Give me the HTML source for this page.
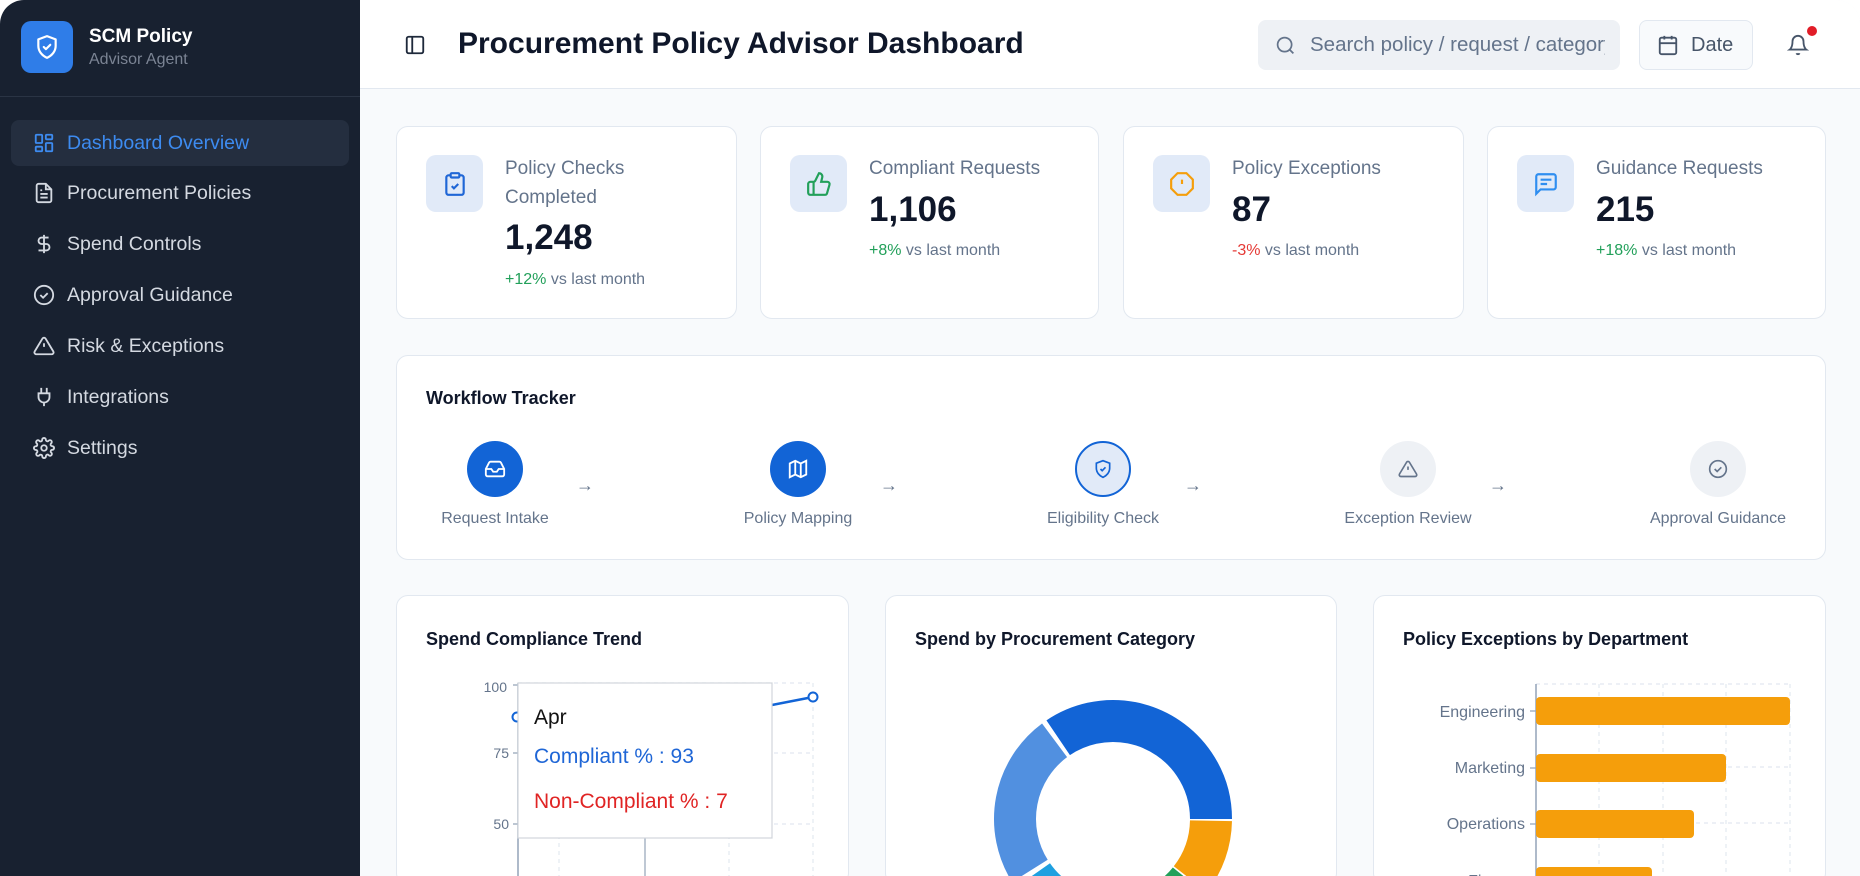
<!DOCTYPE html>
<html><head><meta charset="utf-8"><style>
*{box-sizing:border-box;margin:0;padding:0}
body{width:1860px;height:876px;background:#fff;font-family:"Liberation Sans",sans-serif;overflow:hidden}
#app{position:absolute;left:0;top:0;width:1860px;height:876px;border-radius:24px 24px 0 0;overflow:hidden;background:#f8fafc}
.side{position:absolute;left:0;top:0;width:360px;height:876px;background:#182130}
.abs{position:absolute}
.nav{position:absolute;left:11px;width:338px;height:46px;display:flex;align-items:center;color:#d4d9e1;font-size:19.5px}
.nav svg{position:absolute;left:22px}
.nav span{position:absolute;left:56px}
.card{position:absolute;background:#fff;border:1.5px solid #e2e8f0;border-radius:12px}
.ibox{position:absolute;left:29px;top:28px;width:57px;height:57px;border-radius:10px;background:#e1eaf8;display:flex;align-items:center;justify-content:center}
.lbl{position:absolute;left:108px;color:#64748b;font-size:19px;line-height:29px}
.val{position:absolute;left:108px;color:#0f172a;font-size:35px;font-weight:bold}
.chg{position:absolute;left:108px;color:#64748b;font-size:16px}
.g{color:#22a05a}.r{color:#e53935}
.ct{position:absolute;left:29px;top:32px;font-size:18px;font-weight:bold;color:#0f172a}
.step{position:absolute;width:56px;height:56px;border-radius:50%;display:flex;align-items:center;justify-content:center}
.sl{position:absolute;width:200px;text-align:center;font-size:16px;color:#64748b}
.arr{position:absolute;color:#64748b;font-size:18px}
</style></head><body><div id="app">
<div class="side">
 <div class="abs" style="left:21px;top:21px;width:52px;height:52px;border-radius:10px;background:#2f7de8;display:flex;align-items:center;justify-content:center">
  <svg width="26" height="26" viewBox="0 0 24 24" fill="none" stroke="#fff" stroke-width="2" stroke-linecap="round" stroke-linejoin="round"><path d="M12 2l8 3v6c0 5-3.5 9-8 11-4.5-2-8-6-8-11V5z"/><path d="M9 12l2 2 4-4"/></svg>
 </div>
 <div class="abs" style="left:89px;top:26px;color:#fff;font-size:19px;font-weight:bold">SCM Policy</div>
 <div class="abs" style="left:89px;top:51px;color:#7b8494;font-size:16px">Advisor Agent</div>
 <div class="abs" style="left:0;top:96px;width:360px;height:1px;background:#2a3444"></div>
 <div class="nav" style="top:120px;background:#242e3f;border-radius:8px;color:#3d8bf0"><svg width="22" height="22" viewBox="0 0 24 24" fill="none" stroke="#3d8bf0" stroke-width="2"><rect x="3" y="3" width="7" height="9" rx="1"/><rect x="14" y="3" width="7" height="5" rx="1"/><rect x="14" y="12" width="7" height="9" rx="1"/><rect x="3" y="16" width="7" height="5" rx="1"/></svg><span>Dashboard Overview</span></div>
 <div class="nav" style="top:170px"><svg width="22" height="22" viewBox="0 0 24 24" fill="none" stroke="#d4d9e1" stroke-width="2"><path d="M14 2H6a2 2 0 0 0-2 2v16a2 2 0 0 0 2 2h12a2 2 0 0 0 2-2V8z"/><path d="M14 2v6h6M8 13h8M8 17h8M8 9h2"/></svg><span>Procurement Policies</span></div>
 <div class="nav" style="top:221px"><svg width="22" height="22" viewBox="0 0 24 24" fill="none" stroke="#d4d9e1" stroke-width="2"><path d="M12 2v20M17 5H9.5a3.5 3.5 0 0 0 0 7h5a3.5 3.5 0 0 1 0 7H6"/></svg><span>Spend Controls</span></div>
 <div class="nav" style="top:272px"><svg width="22" height="22" viewBox="0 0 24 24" fill="none" stroke="#d4d9e1" stroke-width="2"><circle cx="12" cy="12" r="10"/><path d="M8 12l3 3 5-5"/></svg><span>Approval Guidance</span></div>
 <div class="nav" style="top:323px"><svg width="22" height="22" viewBox="0 0 24 24" fill="none" stroke="#d4d9e1" stroke-width="2"><path d="M10.3 3.9L1.8 18a2 2 0 0 0 1.7 3h17a2 2 0 0 0 1.7-3L13.7 3.9a2 2 0 0 0-3.4 0z"/><path d="M12 9v4M12 17h.01"/></svg><span>Risk &amp; Exceptions</span></div>
 <div class="nav" style="top:374px"><svg width="22" height="22" viewBox="0 0 24 24" fill="none" stroke="#d4d9e1" stroke-width="2"><path d="M9 2v6M15 2v6M6 8h12v4a6 6 0 0 1-12 0zM12 18v4"/></svg><span>Integrations</span></div>
 <div class="nav" style="top:425px"><svg width="22" height="22" viewBox="0 0 24 24" fill="none" stroke="#d4d9e1" stroke-width="2"><circle cx="12" cy="12" r="3"/><path d="M19.4 15a1.7 1.7 0 0 0 .3 1.8l.1.1a2 2 0 1 1-2.8 2.8l-.1-.1a1.7 1.7 0 0 0-1.8-.3 1.7 1.7 0 0 0-1 1.5V21a2 2 0 1 1-4 0v-.1a1.7 1.7 0 0 0-1.1-1.5 1.7 1.7 0 0 0-1.8.3l-.1.1a2 2 0 1 1-2.8-2.8l.1-.1a1.7 1.7 0 0 0 .3-1.8 1.7 1.7 0 0 0-1.5-1H3a2 2 0 1 1 0-4h.1a1.7 1.7 0 0 0 1.5-1.1 1.7 1.7 0 0 0-.3-1.8l-.1-.1a2 2 0 1 1 2.8-2.8l.1.1a1.7 1.7 0 0 0 1.800.3H9a1.7 1.7 0 0 0 1-1.5V3a2 2 0 1 1 4 0v.1a1.7 1.7 0 0 0 1 1.5 1.7 1.7 0 0 0 1.8-.3l.1-.1a2 2 0 1 1 2.8 2.8l-.1.1a1.7 1.7 0 0 0-.3 1.8V9a1.7 1.7 0 0 0 1.5 1H21a2 2 0 1 1 0 4h-.1a1.7 1.7 0 0 0-1.5 1z"/></svg><span>Settings</span></div>
</div>
<div class="abs" style="left:360px;top:0;width:1500px;height:89px;background:#fff;border-bottom:1.5px solid #e2e8f0"></div>
<svg class="abs" style="left:404px;top:34px" width="22" height="22" viewBox="0 0 24 24" fill="none" stroke="#1e293b" stroke-width="2"><rect x="3" y="3" width="18" height="18" rx="2"/><path d="M9 3v18"/></svg>
<div class="abs" style="left:458px;top:27px;font-size:30px;font-weight:bold;color:#0f172a">Procurement Policy Advisor Dashboard</div>
<div class="abs" style="left:1258px;top:20px;width:362px;height:50px;background:#eef1f5;border-radius:8px;overflow:hidden">
 <svg class="abs" style="left:17px;top:15px" width="21" height="21" viewBox="0 0 24 24" fill="none" stroke="#64748b" stroke-width="2"><circle cx="11" cy="11" r="8"/><path d="M21 21l-4.3-4.3"/></svg>
 <div class="abs" style="left:52px;top:13px;font-size:20.5px;color:#64748b;white-space:nowrap;width:295px;overflow:hidden">Search policy / request / category</div>
</div>
<div class="abs" style="left:1639px;top:20px;width:114px;height:50px;border:1.5px solid #e2e8f0;border-radius:8px;background:#f8fafc">
 <svg class="abs" style="left:17px;top:13px" width="22" height="22" viewBox="0 0 24 24" fill="none" stroke="#475569" stroke-width="2"><rect x="3" y="4" width="18" height="18" rx="2"/><path d="M16 2v4M8 2v4M3 10h18M8 14h.01M12 14h.01M16 14h.01M8 18h.01M12 18h.01M16 18h.01"/></svg>
 <div class="abs" style="left:51px;top:13px;font-size:20px;color:#475569">Date</div>
</div>
<svg class="abs" style="left:1787px;top:33px" width="22" height="24" viewBox="0 0 24 24" fill="none" stroke="#475569" stroke-width="2"><path d="M6 8a6 6 0 0 1 12 0c0 7 3 9 3 9H3s3-2 3-9M10.3 21a1.9 1.9 0 0 0 3.4 0"/></svg>
<div class="abs" style="left:1807px;top:26px;width:10px;height:10px;border-radius:50%;background:#e11d28"></div>

<div class="card" style="left:396px;top:126px;width:341px;height:193px">
 <div class="ibox"><svg width="26" height="26" viewBox="0 0 24 24" fill="none" stroke="#1f66d6" stroke-width="2"><rect x="8" y="2" width="8" height="4" rx="1"/><path d="M16 4h2a2 2 0 0 1 2 2v14a2 2 0 0 1-2 2H6a2 2 0 0 1-2-2V6a2 2 0 0 1 2-2h2M9 14l2 2 4-4"/></svg></div>
 <div class="lbl" style="top:27px">Policy Checks<br>Completed</div>
 <div class="val" style="top:91px">1,248</div>
 <div class="chg" style="top:144px"><span class="g">+12%</span> vs last month</div>
</div>
<div class="card" style="left:760px;top:126px;width:339px;height:193px">
 <div class="ibox"><svg width="26" height="26" viewBox="0 0 24 24" fill="none" stroke="#22a05a" stroke-width="2"><path d="M7 10v12M15 5.9L14 10h5.8a2 2 0 0 1 1.9 2.6l-2.3 8A2 2 0 0 1 17.5 22H4a2 2 0 0 1-2-2v-8a2 2 0 0 1 2-2h2.8a2 2 0 0 0 1.8-1.1L12 2a3.1 3.1 0 0 1 3 3.9z"/></svg></div>
 <div class="lbl" style="top:27px">Compliant Requests</div>
 <div class="val" style="top:63px">1,106</div>
 <div class="chg" style="top:115px"><span class="g">+8%</span> vs last month</div>
</div>
<div class="card" style="left:1123px;top:126px;width:341px;height:193px">
 <div class="ibox"><svg width="26" height="26" viewBox="0 0 24 24" fill="none" stroke="#f59e0b" stroke-width="2"><path d="M7.9 2h8.2L22 7.9v8.2L16.1 22H7.9L2 16.1V7.9z"/><path d="M12 8v4M12 16h.01"/></svg></div>
 <div class="lbl" style="top:27px">Policy Exceptions</div>
 <div class="val" style="top:63px">87</div>
 <div class="chg" style="top:115px"><span class="r">-3%</span> vs last month</div>
</div>
<div class="card" style="left:1487px;top:126px;width:339px;height:193px">
 <div class="ibox"><svg width="26" height="26" viewBox="0 0 24 24" fill="none" stroke="#2f8ef0" stroke-width="2"><path d="M21 15a2 2 0 0 1-2 2H7l-4 4V5a2 2 0 0 1 2-2h14a2 2 0 0 1 2 2z"/><path d="M7 8h10M7 12h6"/></svg></div>
 <div class="lbl" style="top:27px">Guidance Requests</div>
 <div class="val" style="top:63px">215</div>
 <div class="chg" style="top:115px"><span class="g">+18%</span> vs last month</div>
</div>

<div class="card" style="left:396px;top:355px;width:1430px;height:205px">
 <div class="ct" style="top:32px">Workflow Tracker</div>
</div>
<div class="step" style="left:467px;top:441px;background:#1264d6"><svg width="22" height="22" viewBox="0 0 24 24" fill="none" stroke="#fff" stroke-width="2"><path d="M22 12h-6l-2 3h-4l-2-3H2"/><path d="M5.5 5.1L2 12v6a2 2 0 0 0 2 2h16a2 2 0 0 0 2-2v-6l-3.5-6.9A2 2 0 0 0 16.8 4H7.2a2 2 0 0 0-1.7 1.1z"/></svg></div>
<div class="step" style="left:770px;top:441px;background:#1264d6"><svg width="22" height="22" viewBox="0 0 24 24" fill="none" stroke="#fff" stroke-width="2"><path d="M3 6l6-3 6 3 6-3v15l-6 3-6-3-6 3zM9 3v15M15 6v15"/></svg></div>
<div class="step" style="left:1075px;top:441px;background:#e1eaf8;border:2.5px solid #1264d6"><svg width="20" height="20" viewBox="0 0 24 24" fill="none" stroke="#1264d6" stroke-width="2"><path d="M12 2l8 3v6c0 5-3.5 9-8 11-4.5-2-8-6-8-11V5z"/><path d="M9 12l2 2 4-4"/></svg></div>
<div class="step" style="left:1380px;top:441px;background:#eef1f5"><svg width="20" height="20" viewBox="0 0 24 24" fill="none" stroke="#64748b" stroke-width="2"><path d="M10.3 3.9L1.8 18a2 2 0 0 0 1.7 3h17a2 2 0 0 0 1.7-3L13.7 3.9a2 2 0 0 0-3.4 0z"/><path d="M12 9v4M12 17h.01"/></svg></div>
<div class="step" style="left:1690px;top:441px;background:#eef1f5"><svg width="20" height="20" viewBox="0 0 24 24" fill="none" stroke="#64748b" stroke-width="2"><circle cx="12" cy="12" r="10"/><path d="M8 12l3 3 5-5"/></svg></div>
<div class="sl" style="left:395px;top:510px">Request Intake</div>
<div class="sl" style="left:698px;top:510px">Policy Mapping</div>
<div class="sl" style="left:1003px;top:510px">Eligibility Check</div>
<div class="sl" style="left:1308px;top:510px">Exception Review</div>
<div class="sl" style="left:1618px;top:510px">Approval Guidance</div>
<div class="arr" style="left:576px;top:475px">→</div>
<div class="arr" style="left:880px;top:475px">→</div>
<div class="arr" style="left:1184px;top:475px">→</div>
<div class="arr" style="left:1489px;top:475px">→</div>

<div class="card" style="left:396px;top:595px;width:453px;height:290px"><div class="ct" style="top:33px">Spend Compliance Trend</div></div>
<div class="card" style="left:885px;top:595px;width:452px;height:290px"><div class="ct" style="top:33px">Spend by Procurement Category</div></div>
<div class="card" style="left:1373px;top:595px;width:453px;height:290px"><div class="ct" style="top:33px">Policy Exceptions by Department</div></div>

<svg class="abs" style="left:0;top:0" width="1860" height="876">
 <g stroke="#e2e8f0" stroke-dasharray="4 4" stroke-width="1.2">
  <path d="M518 683H813M518 753H813M518 824H813M559 683V876M729 683V876M813 683V876"/>
  <path d="M1536 684H1790M1599 684V876M1663 684V876M1726 684V876M1790 684V876M1536 767H1790M1536 823H1790"/>
 </g>
 <path d="M645 683V876" stroke="#94a3b8" stroke-width="1.2"/>
 <path d="M518 683V876M1536 684V876" stroke="#94a3b8" stroke-width="1.5"/>
 <path d="M513 685h5M513 753h5M513 824h5M1530 711h6M1530 768h6M1530 824h6" stroke="#94a3b8" stroke-width="1.2"/>
 <g font-family="Liberation Sans" font-size="14" fill="#64748b" text-anchor="end">
  <text x="507" y="692">100</text><text x="509" y="758">75</text><text x="509" y="829">50</text>
 </g>
 <g font-family="Liberation Sans" font-size="16" fill="#64748b" text-anchor="end">
  <text x="1525" y="717">Engineering</text><text x="1525" y="773">Marketing</text><text x="1525" y="829">Operations</text><text x="1525" y="886">Finance</text>
 </g>
 <polyline points="517,717 772,705 813,697" fill="none" stroke="#1264d6" stroke-width="2.5"/>
 <circle cx="517" cy="717" r="4.5" fill="#fff" stroke="#1264d6" stroke-width="2"/>
 <circle cx="813" cy="697" r="4.5" fill="#fff" stroke="#1264d6" stroke-width="2"/>
 <g fill="#f59e0b">
  <rect x="1536" y="697" width="254" height="28" rx="4"/>
  <rect x="1536" y="754" width="190" height="28" rx="4"/>
  <rect x="1536" y="810" width="158" height="28" rx="4"/>
  <rect x="1536" y="867" width="116" height="28" rx="4"/>
 </g>
 <g fill="none" stroke-width="42" transform="translate(1113 819)">
  <circle r="98" stroke="#1264d6" stroke-dasharray="212 1000" transform="rotate(-124)"/>
  <circle r="98" stroke="#f59e0b" stroke-dasharray="63 1000" transform="rotate(1)"/>
  <circle r="98" stroke="#22a05a" stroke-dasharray="51 1000" transform="rotate(39)"/>
  <circle r="98" stroke="#0ea5a5" stroke-dasharray="65 1000" transform="rotate(71)"/>
  <circle r="98" stroke="#1fa0e0" stroke-dasharray="58 1000" transform="rotate(111)"/>
  <circle r="98" stroke="#5190e0" stroke-dasharray="146 1000" transform="rotate(148)"/>
 </g>
 <rect x="518" y="683" width="254" height="155" fill="#fff" stroke="#d1d5db" stroke-width="1.2"/>
 <g font-family="Liberation Sans" font-size="21">
  <text x="534" y="724" fill="#111">Apr</text>
  <text x="534" y="763" fill="#1f66d6">Compliant % : 93</text>
  <text x="534" y="808" fill="#e02424">Non-Compliant % : 7</text>
 </g>
</svg>
</div></body></html>
